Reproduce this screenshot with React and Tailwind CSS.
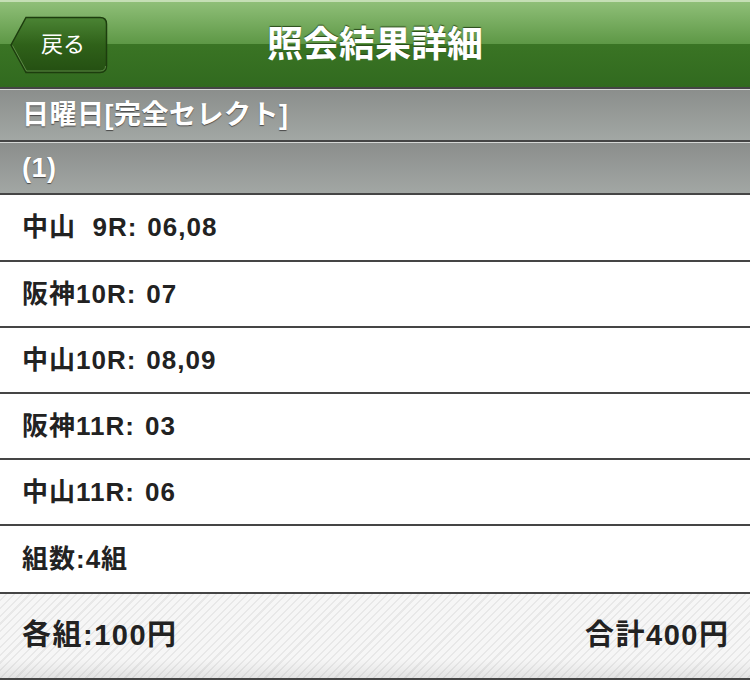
const rows = [
  { label: "中山  9R:", value: "06,08", h: "h-[67px]" },
  { label: "阪神10R:", value: "07", h: "h-[66px]" },
  { label: "中山10R:", value: "08,09", h: "h-[66px]" },
  { label: "阪神11R:", value: "03", h: "h-[66px]" },
  { label: "中山11R:", value: "06", h: "h-[66px]" },
];

function BackButton() {
  return (
    <button className="relative ml-[10px] flex h-[58px] w-[98px] items-center justify-center pl-[8px] text-[22px] text-white">
      <svg
        className="absolute inset-0"
        width="98"
        height="58"
        viewBox="0 0 98 58"
      >
        <defs>
          <linearGradient id="bk" x1="0" y1="0" x2="0" y2="1">
            <stop offset="0" stopColor="#4b8434" />
            <stop offset="0.5" stopColor="#2f6119" />
            <stop offset="1" stopColor="#244f12" />
          </linearGradient>
        </defs>
        <path
          d="M1 29 L16 1.5 H90 Q96.5 1.5 96.5 8 V50 Q96.5 56.5 90 56.5 H16 Z"
          fill="url(#bk)"
          stroke="#1d3d0e"
          strokeWidth="1.5"
        />
        <path
          d="M2.5 29.5 L16.5 55 H90 Q95.5 55 95.5 50"
          fill="none"
          stroke="#7fae66"
          strokeWidth="1"
          opacity="0.6"
        />
      </svg>
      <span className="relative">戻る</span>
    </button>
  );
}

function GrayBar({ children }) {
  return (
    <div className="border-t-2 border-[#454545]">
      <div className="flex h-[51px] items-center border-t border-[#d6d8d6] bg-[linear-gradient(to_bottom,#8b8e8c,#a2a7a4)] px-[22px] text-[27px] font-bold tracking-[0.5px] text-white [text-shadow:0_1px_1px_#4a4a4a]">
        {children}
      </div>
    </div>
  );
}

export default function App() {
  return (
    <div className="min-h-[693px] w-[750px] bg-white font-['Liberation_Sans','Noto_Sans_CJK_JP',sans-serif]">
      <header className="grid h-[87px] grid-cols-[1fr_auto_1fr] items-center border-t-2 border-[#c5dfb5] bg-[linear-gradient(to_bottom,#8fbf78_0%,#5d9745_50%,#3a7424_50%,#316a1f_100%)]">
        <div className="flex items-center">
          <BackButton />
        </div>
        <h1 className="text-[36px] font-bold text-white [text-shadow:0_-1px_1px_#2a4a1a]">
          照会結果詳細
        </h1>
        <div />
      </header>

      <GrayBar>日曜日[完全セレクト]</GrayBar>
      <GrayBar>(1)</GrayBar>

      <div className="border-t-2 border-[#454545]">
        {rows.map((r) => (
          <div
            key={r.label}
            className={`flex ${r.h} items-center border-b-2 border-[#454545] px-[22px] text-[26px] font-bold tracking-[1px] text-[#222]`}
          >
            <span className="whitespace-pre">{r.label}</span>
            <span className="ml-[10px]">{r.value}</span>
          </div>
        ))}
        <div className="flex h-[68px] items-center border-b-2 border-[#454545] px-[22px] text-[26px] font-bold tracking-[1px] text-[#222]">
          組数:4組
        </div>
      </div>

      <footer className="flex h-[86px] items-center justify-between border-b-2 border-[#454545] bg-[linear-gradient(to_bottom,rgba(255,255,255,0)_78%,rgba(0,0,0,0.08)),repeating-linear-gradient(135deg,#f6f6f6_0px,#f6f6f6_4px,#e8e8e8_4px,#e8e8e8_5.5px)] px-[22px] text-[29px] font-bold tracking-[1.5px] text-[#222]">
        <span>各組:100円</span>
        <span className="-mr-[1.5px]">合計400円</span>
      </footer>
    </div>
  );
}
